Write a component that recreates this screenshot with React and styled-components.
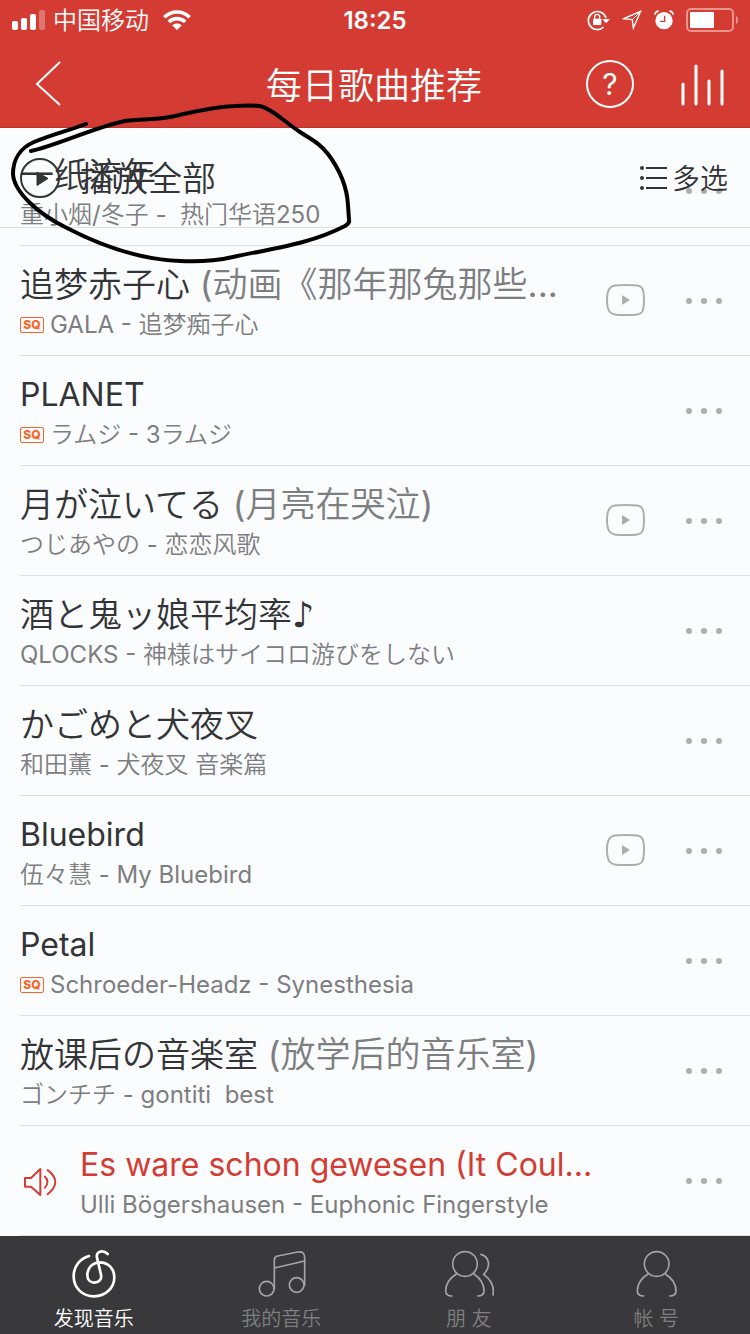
import React from 'react';
import styled, { createGlobalStyle, css } from 'styled-components';

const GlobalStyle = createGlobalStyle`
	* {
		box-sizing: border-box;
	}
	body {
		margin: 0;
		background: #fbfcfe;
		color: #333436;
		font-family: Inter, 'Noto Sans CJK SC DemiLight', 'Noto Sans CJK SC', sans-serif;
		font-weight: 400;
	}
	svg {
		display: block;
		flex: none;
	}
	h1, h2, p, ul {
		margin: 0;
		padding: 0;
		font-weight: inherit;
	}
	button {
		display: flex;
		align-items: center;
		padding: 0;
		border: 0;
		background: none;
		color: inherit;
		font: inherit;
		cursor: pointer;
	}
`;

const Page = styled.div`
	position: relative;
	display: flex;
	flex-direction: column;
	min-height: 100vh;
`;

const Header = styled.header`
	background: #d43c33;
	border-bottom: 1px solid #b9342c;
	color: #fff;
`;

const StatusBar = styled.div`
	display: grid;
	grid-template-columns: 1fr auto 1fr;
	align-items: center;
	height: 40px;
	padding: 0 12px;
	font-size: 24px;
	line-height: 36px;
`;

const StatusGroup = styled.div`
	display: flex;
	align-items: center;
	justify-content: ${(props) => (props.$end ? 'flex-end' : 'flex-start')};
	gap: ${(props) => (props.$end ? '12px' : '8px')};
`;

const Carrier = styled.span`
	padding: 2px 6px 0 0;
`;

const Time = styled.time`
	padding-top: 2px;
	font-weight: 600;
`;

const NavBar = styled.nav`
	display: grid;
	grid-template-columns: 1fr auto 1fr;
	align-items: center;
	height: 87px;
	padding: 0 26px 0 24px;
`;

const NavTitle = styled.h1`
	padding-top: 4px;
	font-size: 36px;
	line-height: 48px;
`;

const NavActions = styled.div`
	display: flex;
	align-items: center;
	justify-content: flex-end;
	gap: 44px;
`;

const HelpButton = styled.button`
	&& {
		justify-content: center;
		width: 48px;
		height: 48px;
		border: 2px solid #fff;
		border-radius: 50%;
		font-size: 30px;
		line-height: 40px;
	}
`;

const Main = styled.main`
	position: relative;
	flex: 1;
	padding-top: 8px;
`;

/* floats above the first song of the list */
const PlayAllBar = styled.div`
	position: absolute;
	top: 0;
	left: 0;
	right: 0;
	display: flex;
	align-items: center;
	justify-content: space-between;
	height: 100px;
	padding: 0 22px 0 20px;
	border-bottom: 1px solid #dfe0e2;
`;

const BarButton = styled.button`
	&& {
		gap: ${(props) => (props.$large ? '20px' : '4px')};
		font-size: ${(props) => (props.$large ? '34px' : '28px')};
		line-height: 48px;
	}
	& > span {
		padding-top: 2px;
	}
`;

const SongList = styled.ul`
	list-style: none;
`;

const SongRow = styled.li`
	display: flex;
	align-items: center;
	height: 110px;
	margin-left: 20px;
	padding-right: 26px;
	border-bottom: 1px solid #dfe0e2;
`;

const Playing = styled.span`
	width: 60px;
	padding: 2px 0 0 2px;
	color: #d43c33;
`;

const SongText = styled.div`
	flex: 1;
	min-width: 0;
	padding-top: 4px;
	white-space: nowrap;
`;

const SongTitle = styled.h2`
	overflow: hidden;
	font-size: ${(props) => (props.$latin ? '32px' : '34px')};
	line-height: 44px;
	${(props) =>
		props.$playing &&
		css`
			color: #d43c33;
		`}
`;

const Alias = styled.span`
	color: #7d7e80;
	font-size: 35px;
`;

const Note = styled.span`
	font-family: 'DejaVu Sans', sans-serif;
	font-size: 35px;
	line-height: 1;
`;

const SongInfo = styled.p`
	display: flex;
	align-items: center;
	gap: 6px;
	font-size: 24px;
	line-height: 36px;
	color: #7d7e80;
	white-space: pre;
`;

const Quality = styled.span`
	width: 24px;
	height: 16px;
	border: 1px solid #fa6428;
	border-radius: 2px;
	color: #fa6428;
	font-size: 12px;
	font-weight: 800;
	line-height: 14px;
	text-align: center;
`;

const SongActions = styled.div`
	display: flex;
	align-items: center;
	gap: 40px;
	padding-bottom: 2px;
	color: #adaeb0;
`;

const TabBar = styled.nav`
	display: flex;
	height: 98px;
	background: #39393b;
`;

const Tab = styled.a`
	flex: 1;
	display: flex;
	flex-direction: column;
	align-items: center;
	gap: 7px;
	padding-top: 10px;
	color: ${(props) => (props.$active ? '#fff' : '#7e7e80')};
	font-size: 20px;
	line-height: 28px;
	text-decoration: none;
	& > svg {
		color: ${(props) => (props.$active ? '#fff' : '#a5a5a7')};
	}
`;

const Scribble = styled.svg`
	position: absolute;
	top: 100px;
	left: 0;
	pointer-events: none;
`;

const SignalIcon = () => (
	<svg width="33" height="20" viewBox="0 0 33 20" fill="#fff">
		<rect y="11" width="6" height="9" rx="2" />
		<rect x="9" y="8" width="6" height="12" rx="2" />
		<rect x="18" y="4" width="6" height="16" rx="2" />
		<rect x="27" width="6" height="20" rx="2" opacity=".3" />
	</svg>
);

const WifiIcon = () => (
	<svg width="28" height="20" viewBox="0 0 28 20" fill="none" stroke="#fff" strokeWidth="3.6">
		<path d="M1.3 7.2C8.5 .2 19.5 .2 26.7 7.2" />
		<path d="M5.8 11.8C10.5 7.5 17.5 7.5 22.2 11.8" />
		<path d="M14 20L9.3 15.4C12 13 16 13 18.7 15.4Z" fill="#fff" stroke="none" />
	</svg>
);

const LockIcon = () => (
	<svg width="23" height="22" viewBox="0 0 69 66" fill="none" stroke="#fff" strokeWidth="5">
		<path d="M50 54A27 27 0 1 1 57 27" />
		<path d="M46 30H69L57 43Z" fill="#fff" stroke="none" />
		<rect x="18" y="29" width="25" height="19" rx="2" fill="#fff" stroke="none" />
		<path d="M23 30V23Q23 16 30.5 16Q38 16 38 23V30" strokeWidth="4" />
	</svg>
);

const LocationIcon = () => (
	<svg width="20" height="20" viewBox="0 0 60 60" fill="none" stroke="#fff" strokeWidth="4">
		<path d="M5 26L56 4L34 54L31 29Z" />
		<path d="M31 29L56 4" strokeWidth="3" />
	</svg>
);

const AlarmIcon = () => (
	<svg width="20" height="20" viewBox="0 0 60 60">
		<circle cx="30" cy="32" r="26" fill="#fff" />
		<path d="M2 14Q4 4 14 3M58 14Q56 4 46 3" fill="none" stroke="#fff" strokeWidth="5" />
		<path d="M32 17V34H18" fill="none" stroke="#d43c33" strokeWidth="4" />
	</svg>
);

const BatteryIcon = () => (
	<svg width="52" height="24" viewBox="0 0 52 24">
		<rect x="1" y="1" width="46" height="22" rx="4" fill="none" stroke="#fff" strokeWidth="2" opacity=".45" />
		<rect x="4" y="4" width="24" height="16" rx="1" fill="#fff" />
		<path d="M50 8Q52 9 52 12Q52 15 50 16Z" fill="#fff" opacity=".5" />
	</svg>
);

const BackIcon = () => (
	<svg width="40" height="46" viewBox="0 0 40 46" fill="none" stroke="#fff" strokeWidth="2">
		<path d="M36 1L13 23L36 44" />
	</svg>
);

const BarsIcon = () => (
	<svg width="46" height="44" viewBox="0 0 46 44" stroke="#fff" strokeWidth="3" strokeLinecap="round">
		<path d="M5 22V42M18 4V42M31 19V42M44 9V42" />
	</svg>
);

const PlayCircleIcon = () => (
	<svg width="40" height="40" viewBox="0 0 40 40">
		<circle cx="20" cy="20" r="19" fill="none" stroke="currentColor" strokeWidth="2" />
		<path d="M17 14L28 20.5L17 27.5Z" fill="currentColor" stroke="currentColor" strokeLinejoin="round" />
	</svg>
);

const ChecklistIcon = () => (
	<svg width="28" height="24" viewBox="0 0 28 24" fill="currentColor">
		<circle cx="2" cy="2" r="2" />
		<circle cx="2" cy="12" r="2" />
		<circle cx="2" cy="22" r="2" />
		<path d="M6 2H27M6 12H27M6 22H27" stroke="currentColor" strokeWidth="2" />
	</svg>
);

const VideoIcon = () => (
	<svg width="40" height="32" viewBox="0 0 40 32">
		<path
			d="M20 1C31 1 34 1.5 36 4Q38 7 38 16Q38 25 36 28C34 30.5 31 31 20 31C9 31 6 30.5 4 28Q1 25 1 16Q1 7 4 4C6 1.5 9 1 20 1Z"
			fill="none"
			stroke="currentColor"
			strokeWidth="2"
		/>
		<path d="M16 11L24 16L16 21Z" fill="currentColor" />
	</svg>
);

const MoreIcon = () => (
	<svg width="38" height="8" viewBox="0 0 38 8" fill="currentColor">
		<circle cx="3" cy="5" r="3" />
		<circle cx="18" cy="5" r="3" />
		<circle cx="33" cy="5" r="3" />
	</svg>
);

const SpeakerIcon = () => (
	<svg width="36" height="30" viewBox="0 0 108 90" fill="none" stroke="currentColor" strokeWidth="6">
		<path d="M9 33H27L55 6V84L27 59H9Z" strokeLinejoin="round" />
		<path d="M67 27Q86 45 67 64M75 8Q125 44 75 83" />
	</svg>
);

const TabIcon = ({ children, strokeWidth = 5 }) => (
	<svg
		width="50"
		height="52"
		viewBox="0 0 150 156"
		fill="none"
		stroke="currentColor"
		strokeWidth={strokeWidth}
		strokeLinecap="round"
	>
		{children}
	</svg>
);

const songs = [
	{ title: '一纸流年', info: '重小烟/冬子 -  热门华语250' },
	{ title: '追梦赤子心', alias: ' (动画《那年那兔那些...', info: 'GALA - 追梦痴子心', sq: true, video: true },
	{ title: 'PLANET', info: 'ラムジ - 3ラムジ', sq: true, latin: true },
	{ title: '月が泣いてる', alias: ' (月亮在哭泣)', info: 'つじあやの - 恋恋风歌', video: true },
	{ title: '酒と鬼ッ娘平均率', note: '♪', info: 'QLOCKS - 神様はサイコロ游びをしない' },
	{ title: 'かごめと犬夜叉', info: '和田薫 - 犬夜叉 音楽篇' },
	{ title: 'Bluebird', info: '伍々慧 - My Bluebird', video: true, latin: true },
	{ title: 'Petal', info: 'Schroeder-Headz - Synesthesia', sq: true, latin: true },
	{ title: '放课后の音楽室', alias: ' (放学后的音乐室)', info: 'ゴンチチ - gontiti  best' },
	{
		title: 'Es ware schon gewesen (It Coul...',
		info: 'Ulli Bögershausen - Euphonic Fingerstyle',
		playing: true,
		latin: true,
	},
];

const tabs = [
	{
		label: '发现音乐',
		active: true,
		icon: (
			<TabIcon strokeWidth={8}>
				<path d="M60 30C32 38 14 62 14 90C14 126 40 151 75 151C110 151 136 126 136 94C136 66 116 49 92 49C70 50 55 66 55 88C55 101 64 110 76 110C90 110 99 100 96 86L84 35C81 22 90 16 99 16Q108 16 116 24" />
			</TabIcon>
		),
	},
	{
		label: '我的音乐',
		icon: (
			<TabIcon>
				<circle cx="32" cy="128" r="22" />
				<circle cx="122" cy="117" r="22" />
				<path d="M55 128V42Q55 32 65 30L125 18Q146 15 146 35V117M55 66L146 45" />
			</TabIcon>
		),
	},
	{
		label: '朋 友',
		icon: (
			<TabIcon>
				<circle cx="63" cy="54" r="37" />
				<path d="M37 84Q5 104 5 135Q5 150 24 150" />
				<path d="M90 84Q120 104 120 135Q120 150 101 150" />
				<path d="M111 25C134 32 144 60 119 85C140 100 151 122 147 147" />
			</TabIcon>
		),
	},
	{
		label: '帐 号',
		icon: (
			<TabIcon>
				<circle cx="77" cy="54" r="37" />
				<path d="M51 84Q19 104 19 135Q19 150 38 150" />
				<path d="M103 84Q135 104 135 135Q135 150 116 150" />
			</TabIcon>
		),
	},
];

const Song = ({ song }) => (
	<SongRow>
		{song.playing && (
			<Playing>
				<SpeakerIcon />
			</Playing>
		)}
		<SongText>
			<SongTitle $playing={song.playing} $latin={song.latin}>
				{song.title}
				{song.note && <Note>{song.note}</Note>}
				{song.alias && <Alias>{song.alias}</Alias>}
			</SongTitle>
			<SongInfo>
				{song.sq && <Quality>SQ</Quality>}
				<span>{song.info}</span>
			</SongInfo>
		</SongText>
		<SongActions>
			{song.video && (
				<button type="button" aria-label="MV">
					<VideoIcon />
				</button>
			)}
			<button type="button" aria-label="更多">
				<MoreIcon />
			</button>
		</SongActions>
	</SongRow>
);

const App = () => {
	return (
		<Page>
			<GlobalStyle />
			<Header>
				<StatusBar>
					<StatusGroup>
						<SignalIcon />
						<Carrier>中国移动</Carrier>
						<WifiIcon />
					</StatusGroup>
					<Time>18:25</Time>
					<StatusGroup $end>
						<LockIcon />
						<LocationIcon />
						<AlarmIcon />
						<BatteryIcon />
					</StatusGroup>
				</StatusBar>
				<NavBar>
					<button type="button" aria-label="返回">
						<BackIcon />
					</button>
					<NavTitle>每日歌曲推荐</NavTitle>
					<NavActions>
						<HelpButton type="button">?</HelpButton>
						<button type="button" aria-label="正在播放">
							<BarsIcon />
						</button>
					</NavActions>
				</NavBar>
			</Header>
			<Main>
				<SongList>
					{songs.map((song) => (
						<Song key={song.title} song={song} />
					))}
				</SongList>
				<PlayAllBar>
					<BarButton type="button" $large>
						<PlayCircleIcon />
						<span>播放全部</span>
					</BarButton>
					<BarButton type="button">
						<ChecklistIcon />
						<span>多选</span>
					</BarButton>
				</PlayAllBar>
			</Main>
			<TabBar>
				{tabs.map((tab) => (
					<Tab key={tab.label} href="#" $active={tab.active}>
						{tab.icon}
						{tab.label}
					</Tab>
				))}
			</TabBar>
			<Scribble
				width="360"
				height="166"
				viewBox="0 0 360 166"
				fill="none"
				stroke="#000"
				strokeWidth="4"
				strokeLinecap="round"
				strokeLinejoin="round"
			>
				<path d="M31 51C58 45 95 27 125 21C140 19 155 20 170 17C190 13 210 7 235 6C250 5 258 5 263 7C273 10 285 22 300 32C312 40 318 42 328 54C340 70 347 87 348 105L349 120Q350 123 345 126C310 144 275 148 233 157C215 161 198 162 180 161C130 159 90 140 67 128C38 114 14 92 13 74C13 60 20 48 34 42C50 35 70 30 86 24" />
			</Scribble>
		</Page>
	);
};

export default App;
